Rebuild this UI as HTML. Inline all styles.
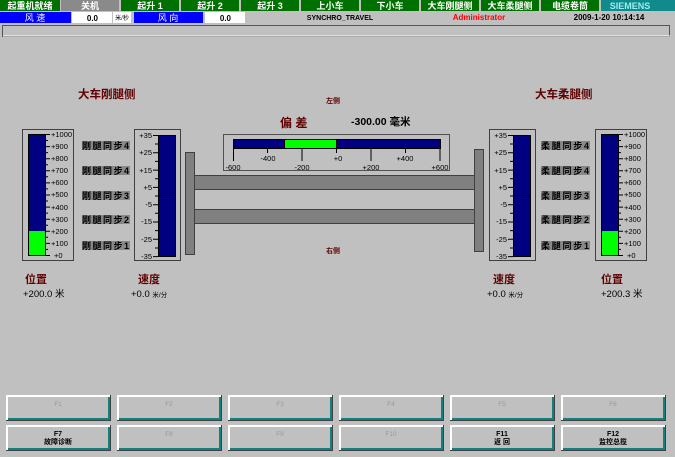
<!DOCTYPE html>
<html><head><meta charset="utf-8"><style>
body{margin:0;width:675px;height:452px;overflow:hidden;background:#c0c0c0;font-family:"Liberation Sans","Noto Sans CJK SC",sans-serif}
svg text{font-family:"Liberation Sans","Noto Sans CJK SC",sans-serif}
</style></head><body>
<svg width="675" height="452" xmlns="http://www.w3.org/2000/svg">
<rect width="675" height="452" fill="#c0c0c0"/>
<g font-size="9" fill="#fff" text-anchor="middle" font-weight="bold">
<rect x="0" y="0" width="60" height="11" fill="#007000"/><text x="30" y="9">起重机就绪</text>
<rect x="61" y="0" width="58" height="11" fill="#8a8a8a"/><text x="90" y="9">关机</text>
<rect x="121" y="0" width="58" height="11" fill="#007000"/><text x="150" y="9">起升 1</text>
<rect x="181" y="0" width="58" height="11" fill="#007000"/><text x="210" y="9">起升 2</text>
<rect x="241" y="0" width="58" height="11" fill="#007000"/><text x="270" y="9">起升 3</text>
<rect x="301" y="0" width="58" height="11" fill="#007000"/><text x="330" y="9">上小车</text>
<rect x="361" y="0" width="58" height="11" fill="#007000"/><text x="390" y="9">下小车</text>
<rect x="421" y="0" width="58" height="11" fill="#007000"/><text x="450" y="9">大车刚腿侧</text>
<rect x="481" y="0" width="58" height="11" fill="#007000"/><text x="510" y="9">大车柔腿侧</text>
<rect x="541" y="0" width="58" height="11" fill="#007000"/><text x="570" y="9">电缆卷筒</text>
<rect x="601" y="0" width="74" height="11" fill="#108a8a"/><text x="630" y="9" fill="#9ee">SIEMENS</text>
</g>
<rect x="0" y="12" width="71" height="11" fill="#0000ff"/><text x="35" y="21" font-size="9" fill="#fff" text-anchor="middle">风 速</text>
<rect x="72" y="12" width="40" height="11" fill="#fff"/><text x="98" y="21" font-size="8" font-weight="bold" text-anchor="end">0.0</text>
<rect x="113" y="12" width="18" height="11" fill="#fff"/><text x="122" y="20" font-size="6" text-anchor="middle">米/秒</text>
<rect x="134" y="12" width="69" height="11" fill="#0000ff"/><text x="168" y="21" font-size="9" fill="#fff" text-anchor="middle">风 向</text>
<rect x="205" y="12" width="40" height="11" fill="#fff"/><text x="231" y="21" font-size="8" font-weight="bold" text-anchor="end">0.0</text>
<text x="340" y="20" font-size="7" font-weight="bold" text-anchor="middle">SYNCHRO_TRAVEL</text>
<text x="479" y="20" font-size="8" font-weight="bold" fill="#ff0000" text-anchor="middle">Administrator</text>
<text x="609" y="20" font-size="8" font-weight="bold" text-anchor="middle">2009-1-20 10:14:14</text>
<rect x="2.5" y="25.5" width="667" height="11" fill="#c0c0c0" stroke="#555"/>
<line x1="3" y1="36" x2="670" y2="36" stroke="#fff"/>

<g fill="#600000" font-weight="bold">
<text x="78" y="98" font-size="11.5">大车刚腿侧</text>
<text x="535" y="98" font-size="11.5">大车柔腿侧</text>
<text x="326" y="103" font-size="7">左侧</text>
<text x="326" y="253" font-size="7">右侧</text>
<text x="280" y="127" font-size="12">偏 差</text>
<text x="25" y="283" font-size="11">位置</text>
<text x="138" y="283" font-size="11">速度</text>
<text x="493" y="283" font-size="11">速度</text>
<text x="601" y="283" font-size="11">位置</text>
</g>
<text x="351" y="125" font-size="10.5" font-weight="bold">-300.00  毫米</text>
<g font-size="9.5">
<text x="23" y="297">+200.0  米</text>
<text x="131" y="297">+0.0  <tspan font-size="6.5">米/分</tspan></text>
<text x="487" y="297">+0.0  <tspan font-size="6.5">米/分</tspan></text>
<text x="601" y="297">+200.3  米</text>
</g>

<rect x="185.5" y="152.5" width="9" height="102" fill="#808080" stroke="#404040"/>
<rect x="474.5" y="149.5" width="9" height="102" fill="#808080" stroke="#404040"/>
<rect x="194.5" y="175.5" width="280" height="14" fill="#808080" stroke="#404040"/>
<rect x="194.5" y="209.5" width="280" height="14" fill="#808080" stroke="#404040"/>

<rect x="223.5" y="134.5" width="226" height="36" fill="#c0c0c0" stroke="#505050"/>
<rect x="233.5" y="139.5" width="207" height="9" fill="#000080" stroke="#000"/>
<rect x="284.5" y="139.5" width="52" height="9" fill="#00ff00" stroke="#000"/>
<g stroke="#000">
<line x1="233.5" y1="148" x2="233.5" y2="161"/><line x1="267.5" y1="148" x2="267.5" y2="153"/><line x1="302" y1="148" x2="302" y2="161"/><line x1="336.5" y1="148" x2="336.5" y2="153"/><line x1="371" y1="148" x2="371" y2="161"/><line x1="405.5" y1="148" x2="405.5" y2="153"/><line x1="440" y1="148" x2="440" y2="161"/>
</g>
<g font-size="7.5" text-anchor="middle">
<text x="233" y="170">-600</text><text x="268" y="161">-400</text><text x="302" y="170">-200</text><text x="338" y="161">+0</text><text x="371" y="170">+200</text><text x="405" y="161">+400</text><text x="440" y="170">+600</text>
</g>

<g id="pos">
<rect x="22.5" y="129.5" width="51" height="131" fill="#c0c0c0" stroke="#404040"/>
<rect x="28.5" y="134.5" width="17" height="121" fill="#000080" stroke="#000"/>
<rect x="29" y="231" width="16" height="24" fill="#00ff00"/>
<g font-size="7.5">
<text x="51" y="137">+1000</text><text x="51" y="149">+900</text><text x="51" y="161">+800</text><text x="51" y="173">+700</text><text x="51" y="185">+600</text><text x="51" y="197">+500</text><text x="51" y="210">+400</text><text x="51" y="222">+300</text><text x="51" y="234">+200</text><text x="51" y="246">+100</text><text x="54" y="258">+0</text>
</g>
<path d="M46 134.5h4M46 146.6h4M46 158.7h4M46 170.8h4M46 182.9h4M46 195h4M46 207.1h4M46 219.2h4M46 231.3h4M46 243.4h4M46 255.5h4M46 140.5h2M46 152.6h2M46 164.7h2M46 176.8h2M46 188.9h2M46 201h2M46 213.1h2M46 225.2h2M46 237.3h2M46 249.4h2" stroke="#000"/>
</g>
<use href="#pos" x="573"/>

<g id="spd">
<rect x="134.5" y="129.5" width="46" height="131" fill="#c0c0c0" stroke="#404040"/>
<rect x="158.5" y="135.5" width="17" height="121" fill="#000080" stroke="#000"/>
<line x1="158" y1="195.5" x2="176" y2="195.5" stroke="#000"/>
<g font-size="7.5" text-anchor="end">
<text x="152" y="138">+35</text><text x="152" y="155">+25</text><text x="152" y="173">+15</text><text x="152" y="190">+5</text><text x="152" y="207">-5</text><text x="152" y="224">-15</text><text x="152" y="242">-25</text><text x="152" y="259">-35</text>
</g>
<path d="M153 135.5h5M153 152.8h5M153 170.1h5M153 187.4h5M153 204.7h5M153 222h5M153 239.3h5M153 256.6h5M155 144h3M155 161.4h3M155 178.7h3M155 196h3M155 213.3h3M155 230.6h3M155 248h3" stroke="#000"/>
</g>
<use href="#spd" x="355"/>

<g font-size="9" font-weight="bold" fill="#000">
<rect x="82" y="141" width="48" height="9" fill="#888"/><text x="82" y="149" textLength="47">刚腿同步4</text>
<rect x="82" y="166" width="48" height="9" fill="#888"/><text x="82" y="174" textLength="47">刚腿同步4</text>
<rect x="82" y="191" width="48" height="9" fill="#888"/><text x="82" y="199" textLength="47">刚腿同步3</text>
<rect x="82" y="215" width="48" height="9" fill="#888"/><text x="82" y="223" textLength="47">刚腿同步2</text>
<rect x="82" y="241" width="48" height="9" fill="#888"/><text x="82" y="249" textLength="47">刚腿同步1</text>
<rect x="541" y="141" width="49" height="9" fill="#888"/><text x="541" y="149" textLength="48">柔腿同步4</text>
<rect x="541" y="166" width="49" height="9" fill="#888"/><text x="541" y="174" textLength="48">柔腿同步4</text>
<rect x="541" y="191" width="49" height="9" fill="#888"/><text x="541" y="199" textLength="48">柔腿同步3</text>
<rect x="541" y="215" width="49" height="9" fill="#888"/><text x="541" y="223" textLength="48">柔腿同步2</text>
<rect x="541" y="241" width="49" height="9" fill="#888"/><text x="541" y="249" textLength="48">柔腿同步1</text>
</g>

<g id="keys">
<g id="k"><rect x="6" y="395" width="105" height="26" fill="#404040"/><rect x="6" y="395" width="104" height="25" fill="#fff"/><rect x="8" y="397" width="102" height="23" fill="#108080"/><rect x="8" y="397" width="100" height="21" fill="#c0c0c0"/></g>
<use href="#k" x="111"/><use href="#k" x="222"/><use href="#k" x="333"/><use href="#k" x="444"/><use href="#k" x="555"/>
</g>
<use href="#keys" y="30"/>
<g font-size="6.5" text-anchor="middle" fill="#999">
<text x="58" y="406">F1</text><text x="169" y="406">F2</text><text x="280" y="406">F3</text><text x="391" y="406">F4</text><text x="502" y="406">F5</text><text x="613" y="406">F6</text>
<text x="169" y="436">F8</text><text x="280" y="436">F9</text><text x="391" y="436">F10</text>
</g>
<g font-size="7" text-anchor="middle" fill="#000" font-weight="bold">
<text x="58" y="436">F7</text><text x="58" y="444">故障诊断</text>
<text x="502" y="436">F11</text><text x="502" y="444">返 回</text>
<text x="613" y="436">F12</text><text x="613" y="444">监控总揽</text>
</g>
</svg>
</body></html>
